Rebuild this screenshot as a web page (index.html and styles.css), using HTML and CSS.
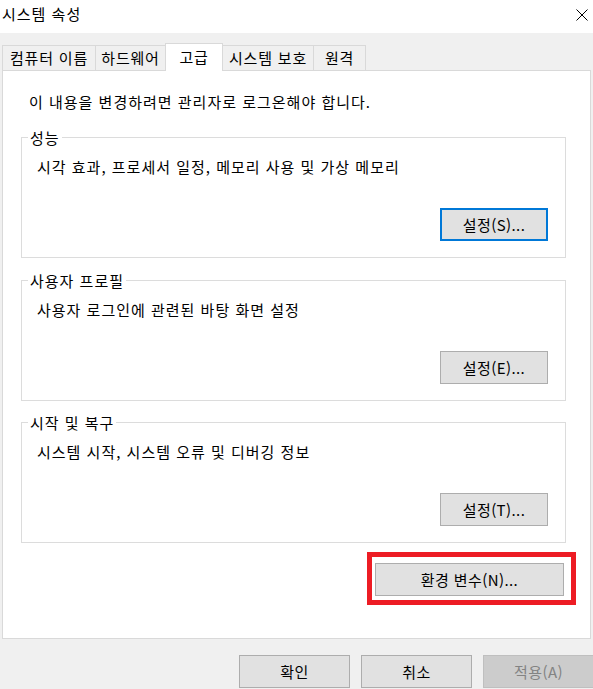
FILE: index.html
```html
<!DOCTYPE html>
<html lang="ko">
<head>
<meta charset="utf-8">
<title>시스템 속성</title>
<link rel="stylesheet" href="styles.css">
</head>
<body>
<div class="window">
  <header class="titlebar">
    <span class="title">시스템 속성</span>
    <svg class="close" width="12" height="12" viewBox="0 0 12 12" aria-hidden="true">
      <path d="M0.5 0.5 L11.5 11.5 M11.5 0.5 L0.5 11.5" stroke="#000" stroke-width="1" fill="none"/>
    </svg>
  </header>

  <nav class="tabs">
    <div class="tab tab-name">컴퓨터 이름</div>
    <div class="tab tab-hw">하드웨어</div>
    <div class="tab tab-adv active">고급</div>
    <div class="tab tab-prot">시스템 보호</div>
    <div class="tab tab-remote">원격</div>
  </nav>

  <main class="panel">
    <p class="notice">이 내용을 변경하려면 관리자로 로그온해야 합니다.</p>

    <fieldset class="group">
      <legend>성능</legend>
      <p class="desc">시각 효과, 프로세서 일정, 메모리 사용 및 가상 메모리</p>
      <div class="group-actions"><button class="btn btn-set focused">설정(S)...</button></div>
    </fieldset>

    <fieldset class="group group-mid">
      <legend>사용자 프로필</legend>
      <p class="desc">사용자 로그인에 관련된 바탕 화면 설정</p>
      <div class="group-actions"><button class="btn btn-set">설정(E)...</button></div>
    </fieldset>

    <fieldset class="group group-last">
      <legend>시작 및 복구</legend>
      <p class="desc">시스템 시작, 시스템 오류 및 디버깅 정보</p>
      <div class="group-actions"><button class="btn btn-set">설정(T)...</button></div>
    </fieldset>

    <div class="env-row">
      <div class="env-wrap">
        <button class="btn btn-env">환경 변수(N)...</button>
        <span class="highlight"></span>
      </div>
    </div>
  </main>

  <footer class="footer">
    <button class="btn btn-foot">확인</button>
    <button class="btn btn-foot">취소</button>
    <button class="btn btn-foot disabled">적용(A)</button>
  </footer>
</div>
</body>
</html>
```

FILE: styles.css
```css
html, body {
  margin: 0;
  padding: 0;
  width: 593px;
  height: 689px;
  overflow: hidden;
  background: #f0f0f0;
}

body {
  font-family: "Noto Sans CJK KR", "Malgun Gothic", sans-serif;
  font-size: 15px;
  letter-spacing: 1px;
  color: #000;
}

.window {
  width: 593px;
  height: 689px;
  display: flex;
  flex-direction: column;
}

/* title bar */
.titlebar {
  height: 33px;
  box-sizing: border-box;
  background: #fff;
  display: flex;
  align-items: flex-start;
  justify-content: space-between;
  padding: 4px 5px 0 2px;
}

.title {
  line-height: 20px;
}

.close {
  margin-top: 5px;
  display: block;
}

/* tabs */
.tabs {
  height: 37px;
  box-sizing: border-box;
  padding: 10px 0 0 2px;
  display: flex;
  align-items: flex-end;
}

.tab {
  box-sizing: border-box;
  height: 25px;
  border: 1px solid #d9d9d9;
  border-bottom: none;
  margin-right: -1px;
  background: #f0f0f0;
  line-height: 23px;
  text-align: center;
  white-space: nowrap;
  letter-spacing: 0.8px;
}

.tab-name { width: 94px; }
.tab-hw { width: 71px; }
.tab-adv { width: 58px; }
.tab-prot { width: 92px; }
.tab-remote { width: 53px; }

.tab.active {
  position: relative;
  z-index: 1;
  height: 28px;
  margin-bottom: -1px;
  background: #fff;
  line-height: 25px;
}

/* panel */
.panel {
  box-sizing: border-box;
  height: 569px;
  margin: 0 2px;
  border: 1px solid #d9d9d9;
  background: #fff;
  padding: 21px 0 0 18px;
}

.notice {
  margin: 0 0 15px;
  padding-left: 8px;
  line-height: 20px;
}

.group {
  box-sizing: border-box;
  width: 545px;
  margin: 0 0 12px;
  padding: 9px 17px 16px 6px;
  border: 1px solid #dcdcdc;
  min-inline-size: 0;
}

.group-mid {
  margin-bottom: 11px;
}

.group-last {
  margin-bottom: 0;
}

.group legend {
  padding: 0 2px;
  line-height: 21px;
}

.desc {
  margin: 0 0 0 9px;
  line-height: 20px;
}

.group-actions {
  display: flex;
  justify-content: flex-end;
  margin-top: 31px;
}

/* buttons */
.btn {
  box-sizing: border-box;
  height: 33px;
  padding: 0;
  background: #e1e1e1;
  border: 1px solid #adadad;
  font-family: inherit;
  font-size: 15px;
  letter-spacing: 0.4px;
  color: #000;
  line-height: 20px;
  white-space: nowrap;
}

.btn-set {
  width: 108px;
}

.btn.focused {
  border: 2px solid #0078d7;
}

.env-row {
  display: flex;
  justify-content: flex-end;
  padding-right: 26px;
  margin-top: 20px;
}

.env-wrap {
  position: relative;
}

.btn-env {
  width: 189px;
  display: block;
}

.highlight {
  position: absolute;
  top: -11px;
  left: -8px;
  right: -12px;
  bottom: -9px;
  border: 5px solid #ed1c24;
  pointer-events: none;
}

/* footer */
.footer {
  display: flex;
  justify-content: flex-end;
  gap: 11px;
  padding-top: 16px;
  margin-right: -1px;
}

.btn-foot {
  width: 111px;
  flex: none;
}

.btn.disabled {
  background: #cccccc;
  border-color: #bfbfbf;
  color: #838383;
}
```
